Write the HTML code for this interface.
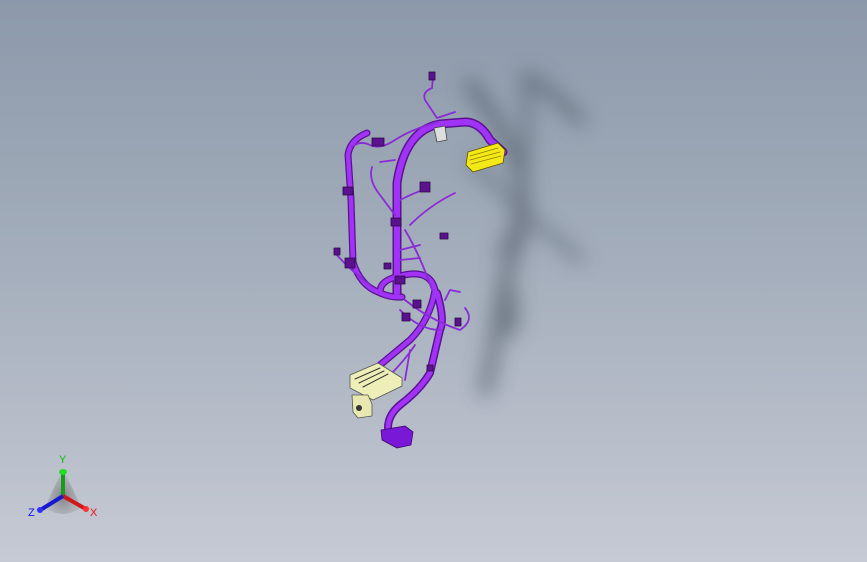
<!DOCTYPE html>
<html><head><meta charset="utf-8"><style>
html,body{margin:0;padding:0}
body{width:867px;height:562px;overflow:hidden;background:linear-gradient(180deg,#8c99aa 0%,#a3adbb 45%,#c6cad4 100%);font-family:"Liberation Sans",sans-serif}
svg{position:absolute;left:0;top:0}
</style></head><body>
<svg width="867" height="562" viewBox="0 0 867 562">
<defs>
<filter id="b" x="-50%" y="-50%" width="200%" height="200%"><feGaussianBlur stdDeviation="10"/></filter>
<radialGradient id="tri" cx="50%" cy="60%" r="50%"><stop offset="0" stop-color="#555"/><stop offset="1" stop-color="#999" stop-opacity="0.5"/></radialGradient>
</defs>
<!-- shadow -->
<g filter="url(#b)" stroke="#4a5260" fill="none" stroke-linecap="round" opacity="0.6">
<path d="M470 85 Q500 120 520 170 Q530 220 510 260 Q500 300 495 340 Q490 370 485 390" stroke-width="14"/>
<path d="M525 75 Q530 130 520 200 Q515 240 500 250" stroke-width="9"/>
<path d="M535 80 Q560 100 580 120" stroke-width="12"/>
<path d="M470 160 Q500 190 530 220 Q560 240 580 260" stroke-width="8"/>
<path d="M505 280 Q515 310 510 330" stroke-width="14"/>
</g>
<!-- harness -->
<g fill="none" stroke-linecap="round" stroke-linejoin="round">
<g stroke="#5a1290">
<path d="M397 293 L397 183 Q405 130 440 124 L465 122 Q480 122 490 140 L503 152" stroke-width="9"/>
<path d="M367 133 Q350 140 348 155 L351 200 L353 262 Q360 285 378 292 Q390 298 402 297" stroke-width="7"/>
<path d="M380 292 Q380 280 400 276 Q430 268 435 290 Q430 320 410 340 L380 365" stroke-width="7"/>
<path d="M437 293 Q445 320 440 330 L430 373 Q420 390 400 405 Q388 415 388 428" stroke-width="8"/>
</g>
<g stroke="#a033f5">
<path d="M397 293 L397 183 Q405 130 440 124 L465 122 Q480 122 490 140 L503 152" stroke-width="6"/>
<path d="M367 133 Q350 140 348 155 L351 200 L353 262 Q360 285 378 292 Q390 298 402 297" stroke-width="4.5"/>
<path d="M380 292 Q380 280 400 276 Q430 268 435 290 Q430 320 410 340 L380 365" stroke-width="4.5"/>
<path d="M437 293 Q445 320 440 330 L430 373 Q420 390 400 405 Q388 415 388 428" stroke-width="5"/>
</g>
<g stroke="#8a2ad8" stroke-width="1.8">
<path d="M433 77 L432 88 Q422 92 425 100 L437 118 L455 112"/>
<path d="M437 122 Q410 130 395 140 Q380 150 370 145 Q360 140 352 147"/>
<path d="M372 167 Q368 180 380 195 L395 215"/>
<path d="M400 200 Q420 190 425 190"/>
<path d="M410 225 Q430 205 455 193"/>
<path d="M405 230 Q420 255 432 290"/>
<path d="M400 250 L420 245"/>
<path d="M400 260 L420 258"/>
<path d="M335 253 Q350 270 370 285"/>
<path d="M405 300 Q430 320 460 330 Q475 320 465 308"/>
<path d="M400 310 Q420 330 440 330"/>
<path d="M445 300 L450 290 L460 292"/>
<path d="M415 345 Q405 360 390 375"/>
<path d="M410 350 L405 380"/>
<path d="M380 162 L395 160"/>
</g>
<g fill="#5a1290" stroke="#2a0a40" stroke-width="0.8">
<rect x="429" y="72" width="6" height="8"/>
<rect x="343" y="187" width="10" height="8"/>
<rect x="345" y="258" width="10" height="10"/>
<rect x="391" y="218" width="10" height="8"/>
<rect x="395" y="276" width="10" height="8"/>
<rect x="372" y="138" width="12" height="8"/>
<rect x="420" y="182" width="10" height="10"/>
<rect x="334" y="248" width="6" height="7"/>
<rect x="440" y="233" width="8" height="6"/>
<rect x="413" y="300" width="8" height="8"/>
<rect x="455" y="318" width="6" height="8"/>
<rect x="402" y="313" width="8" height="8"/>
<rect x="427" y="365" width="6" height="6"/>
<rect x="384" y="263" width="7" height="6"/>
</g>
<path d="M434 128 L445 126 L447 140 L437 142 Z" fill="#ddd" stroke="#444" stroke-width="0.8"/>
<path d="M468 152 L498 143 L505 150 L503 163 L473 172 L466 165 Z" fill="#f5e818" stroke="#5a5000" stroke-width="0.8"/>
<path d="M470 156 L498 148 M470 160 L500 152 M471 164 L501 156" stroke="#8a8000" stroke-width="0.7"/>
<path d="M350 375 L378 363 L402 378 L402 386 L373 400 L350 388 Z" fill="#eeeeb8" stroke="#555" stroke-width="0.8"/>
<path d="M355 379 L380 368 M359 383 L384 371 M363 387 L388 374" stroke="#333" stroke-width="1"/>
<path d="M352 395 L368 395 L372 404 L372 416 L358 418 L353 412 Z" fill="#e8e8b0" stroke="#555" stroke-width="0.8"/>
<circle cx="359" cy="408" r="3" fill="#333"/>
<path d="M381 430 L405 426 L413 432 L411 445 L397 448 L382 440 Z" fill="#7a18d8" stroke="#3a0a6a" stroke-width="0.8"/>
</g>
<g>
<path d="M63 470 Q52 490 45 508 Q63 520 81 508 Q74 490 63 470 Z" fill="url(#tri)" opacity="0.6"/>
<line x1="63" y1="496" x2="63" y2="474" stroke="#1a9a1a" stroke-width="4"/>
<ellipse cx="63" cy="472" rx="4" ry="3" fill="#22dd22"/>
<line x1="63" y1="496" x2="84" y2="508" stroke="#d01818" stroke-width="4"/>
<circle cx="86" cy="509" r="3" fill="#ff3030"/>
<line x1="63" y1="496" x2="42" y2="509" stroke="#1818d0" stroke-width="4"/>
<circle cx="40" cy="510" r="3" fill="#3030ff"/>
<text x="59" y="463" font-size="11" fill="#11bb11" font-family="Liberation Sans">Y</text>
<text x="90" y="516" font-size="11" fill="#ee1111" font-family="Liberation Sans">X</text>
<text x="28" y="516" font-size="11" fill="#1111ee" font-family="Liberation Sans">Z</text>
</g>
</svg>
</body></html>
